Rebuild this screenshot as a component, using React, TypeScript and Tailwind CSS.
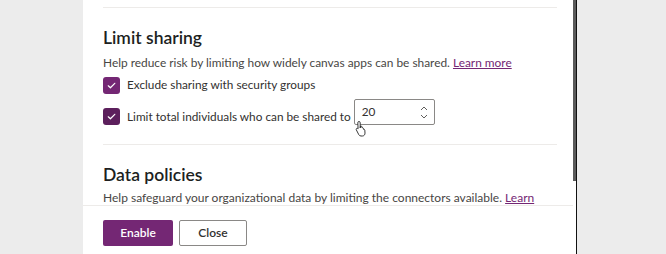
import React from 'react';

const font = { fontFamily: 'Lato, "Liberation Sans", sans-serif' };

const CheckBox = ({ dark }: { dark?: boolean }) => (
  <span
    className={`flex h-[17px] w-[17px] shrink-0 items-center justify-center rounded-[3px] ${
      dark ? 'bg-[#5c1f5c]' : 'bg-[#742774]'
    }`}
  >
    <svg width="11" height="11" viewBox="0 0 12 12" fill="none">
      <path d="M2.5 6.3l2.3 2.2L9.6 3.6" stroke="#fff" strokeWidth="1.3" strokeLinecap="round" strokeLinejoin="round" />
    </svg>
  </span>
);

// mouse pointer sitting over the number field
const HandCursor = () => (
  <svg className="absolute left-[272px] top-[120px]" width="14" height="17" viewBox="0 0 14 17">
    <path
      d="M4 1.5c.7 0 1.2.5 1.2 1.2V8l.3-2c.7-.2 1.3.1 1.4.8l.1 1c.6-.3 1.3 0 1.4.7l.1.8c.6-.2 1.2.1 1.3.8l.2 3c0 1.6-1 2.9-2.6 2.9H6c-1 0-1.7-.5-2.2-1.3L1.4 10c-.4-.6-.2-1.3.3-1.6.5-.3 1.1-.1 1.4.4l-.3-6.1c0-.7.5-1.2 1.2-1.2z"
      fill="#fff"
      stroke="#222"
      strokeWidth="0.9"
    />
  </svg>
);

const App: React.FC = () => {
  return (
    <div className="flex h-[254px] w-[666px] overflow-hidden bg-[#ececec]" style={font}>
      {/* backdrop left */}
      <div className="w-[83px] shrink-0" />

      {/* panel */}
      <div className="relative flex w-[490px] shrink-0 flex-col bg-white">
        <div className="h-[205px] overflow-hidden pl-[20px] pr-[16px]">
          <div className="mt-[7px] border-t border-[#edebe9]" />

          <h2 className="mt-[18px] text-[17.5px] font-semibold leading-[24px] text-[#201f1e]">Limit sharing</h2>
          <p className="mt-[5px] text-[11.9px] leading-[16px] text-[#484644]">
            Help reduce risk by limiting how widely canvas apps can be shared.{' '}
            <span className="text-[#742774] underline">Learn more</span>
          </p>

          <div className="mt-[5px] flex items-center gap-[7px]">
            <CheckBox />
            <span className="text-[11.8px] leading-[18px] text-[#323130]">Exclude sharing with security groups</span>
          </div>

          <div className="mt-[5px] flex items-center gap-[7px]">
            <CheckBox dark />
            <span className="text-[11.8px] leading-[18px] text-[#323130]">Limit total individuals who can be shared to</span>
            <div className="-ml-[4px] mb-[9px] flex h-[26px] w-[81px] items-center justify-between rounded-[2px] border border-[#8a8886] pl-[7px] pr-[6px]">
              <span className="text-[11.8px] text-[#323130]">20</span>
              <div className="flex flex-col gap-[3px]">
                <svg width="8" height="5" viewBox="0 0 8 5" fill="none">
                  <path d="M1 4l3-3 3 3" stroke="#605e5c" strokeWidth="1" />
                </svg>
                <svg width="8" height="5" viewBox="0 0 8 5" fill="none">
                  <path d="M1 1l3 3 3-3" stroke="#605e5c" strokeWidth="1" />
                </svg>
              </div>
            </div>
          </div>

          <div className="mt-[10px] border-t border-[#edebe9]" />

          <h2 className="mt-[18px] text-[17.5px] font-semibold leading-[24px] text-[#201f1e]">Data policies</h2>
          <p className="mt-[3px] text-[12px] leading-[16px] text-[#484644]">
            Help safeguard your organizational data by limiting the connectors available.{' '}
            <span className="text-[#742774] underline">Learn more</span>
          </p>
        </div>

        <div className="flex h-[49px] gap-[6px] border-t border-[#edebe9] pl-[20px] pt-[14px]">
          <button className="h-[26px] w-[70px] rounded-[2px] bg-[#742774] text-[12px] font-semibold text-white">
            Enable
          </button>
          <button className="h-[26px] w-[68px] rounded-[2px] border border-[#8a8886] bg-white text-[12px] font-semibold text-[#323130]">
            Close
          </button>
        </div>

        <HandCursor />
      </div>

      {/* scrollbar */}
      <div className="flex w-[4px] shrink-0 flex-col border-r border-[#111] bg-white">
        <div className="h-[181px] bg-[#5a5a5a]" />
      </div>

      <div className="flex-1" />
    </div>
  );
};

export default App;
